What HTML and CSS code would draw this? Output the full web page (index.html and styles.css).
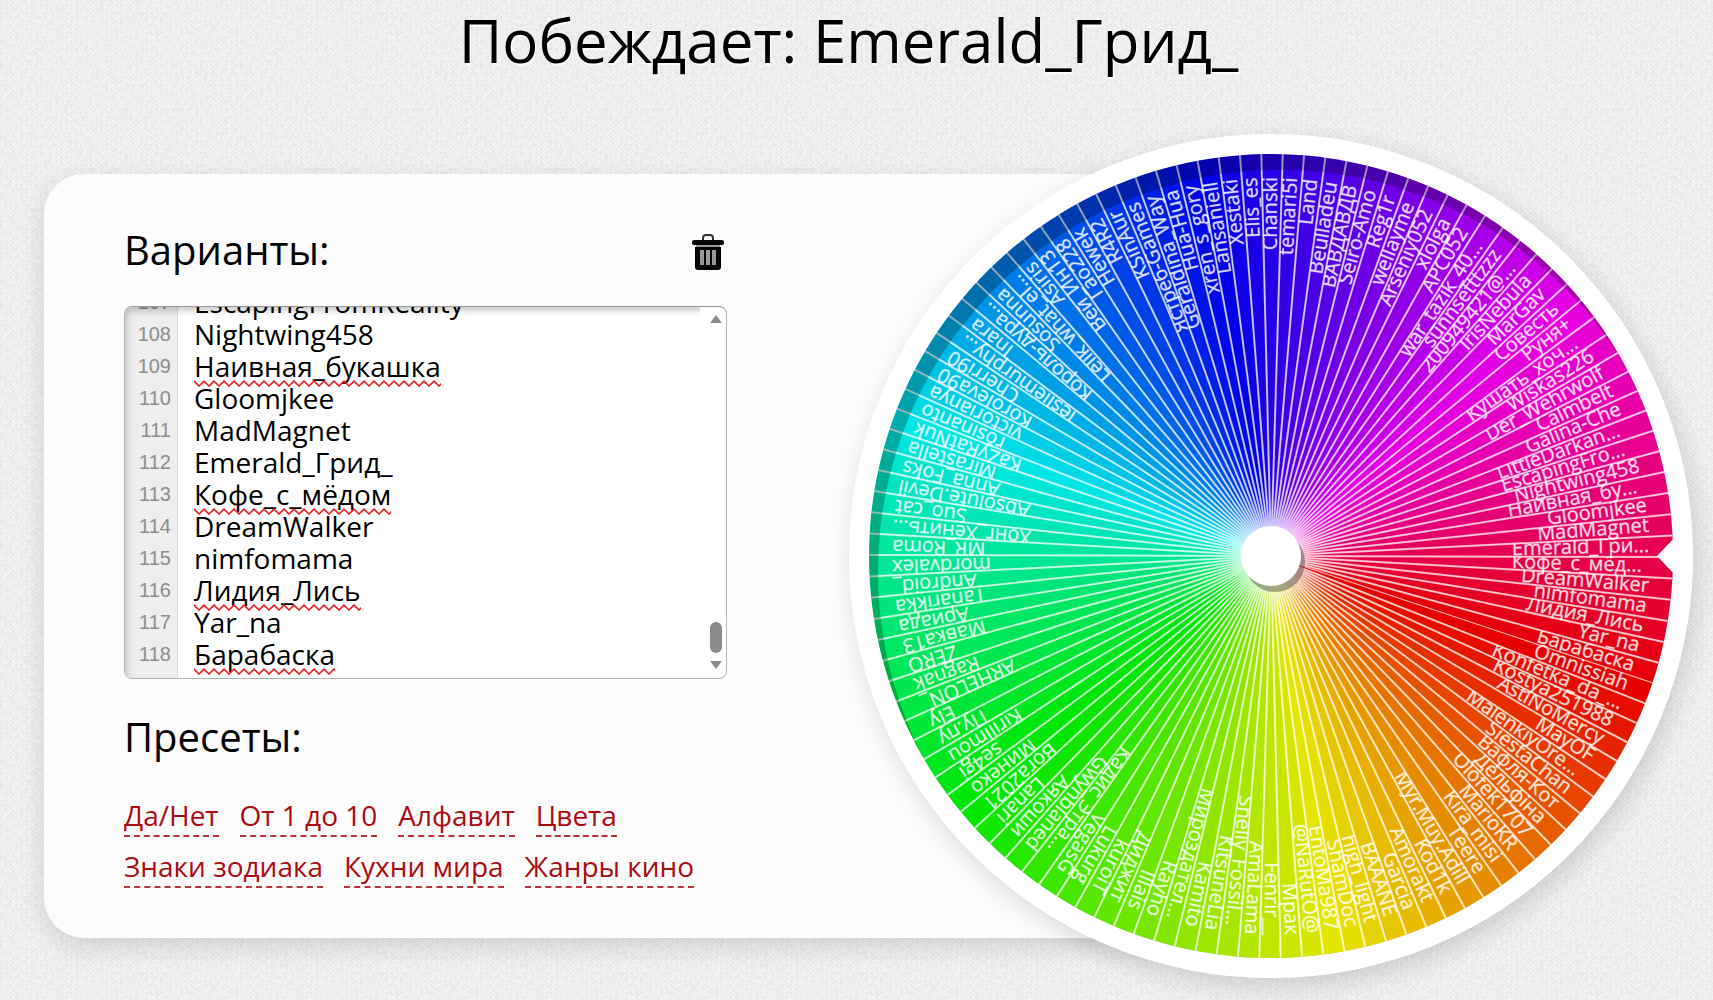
FILE: index.html
```html
<!DOCTYPE html>
<html lang="ru">
<head>
<meta charset="utf-8">
<title>Колесо выбора</title>
<link rel="stylesheet" href="styles.css">
</head>
<body>
<h1 class="result">Побеждает: Emerald_Грид_</h1>
<main class="stage">
  <section class="panel">
    <div class="form">
      <div class="form-head">
        <h2 class="title"><label for="options">Варианты:</label></h2>
        <button class="clear" type="button" aria-label="Очистить">
          <svg viewBox="0 0 32 36" width="32" height="36" aria-hidden="true">
            <path d="M11 7V4q0-3 3-3h4q3 0 3 3v3" fill="none" stroke="#333" stroke-width="2"/>
            <rect x="0" y="6" width="32" height="5" rx="2" fill="#050505"/>
            <rect x="4" y="11" width="24" height="2" fill="#999"/>
            <path d="M3 13h26v20q0 3-3 3H6q-3 0-3-3z" fill="#050505"/>
            <path d="M10 16v15M16 16v15M22 16v15" stroke="#999" stroke-width="4"/>
          </svg>
        </button>
      </div>
      <div class="editor">
        <div class="gutter" id="gutter" aria-hidden="true"></div>
        <div class="field">
          <textarea class="options" id="options" wrap="off" spellcheck="false"></textarea>
          <div class="marks" id="marks"></div>
        </div>
        <div class="scrollbar" aria-hidden="true">
          <svg viewBox="0 0 12 8" width="12" height="8"><path d="M6 0l6 8H0z" fill="#8a8a8a"/></svg>
          <span class="track"><span class="thumb"></span></span>
          <svg viewBox="0 0 12 8" width="12" height="8"><path d="M0 0h12L6 8z" fill="#8a8a8a"/></svg>
        </div>
      </div>
      <h2 class="title presets-title">Пресеты:</h2>
      <nav class="presets">
        <a href="#yesno">Да/Нет</a>
        <a href="#numbers">От 1 до 10</a>
        <a href="#alphabet">Алфавит</a>
        <a href="#colors">Цвета</a>
        <a href="#zodiac">Знаки зодиака</a>
        <a href="#cuisines">Кухни мира</a>
        <a href="#genres">Жанры кино</a>
      </nav>
    </div>
  </section>
  <div class="wheel">
    <svg class="wheel-face" viewBox="-422 -422 844 844" role="img" aria-label="Колесо с вариантами">
      <circle r="422" fill="#fff"/>
      <g id="sectors"></g>
      <path d="M-402 0A402 402 0 1 1 402 0A402 402 0 1 1 -402 0ZM-393 16A402 402 0 1 0 411 16A402 402 0 1 0 -393 16Z" fill="#000" fill-opacity=".25" clip-path="url(#disc)"/>
      <clipPath id="disc"><circle r="402"/></clipPath>
      <path d="M386 0l20-21v42z" fill="#fff"/>
      <circle cx="4" cy="6" r="30" fill="#000" fill-opacity=".33"/>
      <circle r="30" fill="#fff"/>
    </svg>
  </div>
</main>
<script src="wheel.js"></script>
</body>
</html>
```

FILE: styles.css
```css
* {
  box-sizing: border-box;
}

body {
  margin: 0;
  font-family: "Open Sans", "Noto Sans", sans-serif;
  color: #000;
  background-color: #f4f4f4;
  background-image:
    url("data:image/svg+xml,%3Csvg xmlns='http://www.w3.org/2000/svg' width='240' height='240'%3E%3Cfilter id='n' x='0' y='0' width='100%25' height='100%25'%3E%3CfeTurbulence type='fractalNoise' baseFrequency='.25' numOctaves='2' stitchTiles='stitch'/%3E%3CfeColorMatrix values='0 0 0 0 0 0 0 0 0 0 0 0 0 0 0 .09 0 0 0 -.03'/%3E%3C/filter%3E%3Crect width='240' height='240' filter='url(%23n)'/%3E%3C/svg%3E"),
    radial-gradient(circle at 1px 1px, rgba(0, 0, 0, .03) 1px, transparent 1px),
    radial-gradient(circle at 3px 3px, rgba(0, 0, 0, .02) 1px, transparent 1px);
  background-size: 240px 240px, 5px 4px, 5px 4px;
}

.result {
  margin: 0;
  height: 134px;
  padding-right: 16px;
  font-size: 60px;
  font-weight: 400;
  line-height: 80px;
  text-align: center;
  text-shadow: 1px 2px 1px #fff;
}

.stage {
  display: grid;
  grid-template-columns: 805fr 422fr 422fr;
  padding: 0 20px 22px 44px;
}

.panel {
  grid-area: 1 / 1 / 2 / 3;
  align-self: center;
  padding: 48px 0 50px 80px;
  border-radius: 40px 0 0 40px;
  background: #fcfcfc;
  box-shadow: 0 8px 24px rgba(0, 0, 0, .13);
}

.form {
  max-width: 603px;
}

.form-head {
  display: flex;
  align-items: center;
  justify-content: space-between;
  padding-right: 3px;
  margin-bottom: 28px;
}

.title {
  margin: 0;
  font-size: 40px;
  font-weight: 400;
  line-height: 56px;
}

.clear {
  display: flex;
  padding: 4px 0 0;
  border: 0;
  background: none;
}

.editor {
  position: relative;
  display: flex;
  height: 373px;
  border: 1px solid #b4b4b4;
  border-top-color: #999;
  border-radius: 8px;
  background: #fff;
  overflow: hidden;
}

.editor::after {
  content: "";
  position: absolute;
  inset: 0 20px 0 0;
  border-radius: 7px 0 0 7px;
  box-shadow: inset 2px 4px 6px rgba(0, 0, 0, .2);
  clip-path: inset(0 6px 0 0);
  pointer-events: none;
}

.gutter {
  flex: 0 0 53px;
  padding-right: 6px;
  border-right: 1px solid #ddd;
  background: #eee;
  color: #8c8c8c;
  font: 20px/32px "Liberation Sans", Arial, sans-serif;
  text-align: right;
  overflow: hidden;
}

.field {
  position: relative;
  flex: 1;
  overflow: hidden;
}

.options {
  display: block;
  width: 100%;
  height: 100%;
  padding: 8px 16px;
  border: 0;
  outline: 0;
  resize: none;
  background: none;
  color: #000;
  font: 28px/32px "Open Sans", "Noto Sans", sans-serif;
  white-space: pre;
  scrollbar-width: none;
}

.marks {
  position: absolute;
  inset: 0;
  pointer-events: none;
}

.mark {
  position: absolute;
  left: 16px;
  height: 7px;
  background: url("data:image/svg+xml,%3Csvg xmlns='http://www.w3.org/2000/svg' width='10' height='7'%3E%3Cpath d='M-1 0L0 1L5 6L10 1L11 0' fill='none' stroke='%23ee1c24' stroke-width='1.6'/%3E%3C/svg%3E") repeat-x;
}

.scrollbar {
  display: flex;
  flex: 0 0 20px;
  flex-direction: column;
  align-items: center;
  padding: 8px 0 9px;
}

.track {
  display: flex;
  flex: 1;
  align-items: flex-end;
  padding-bottom: 8px;
}

.thumb {
  width: 12px;
  height: 31px;
  border-radius: 6px;
  background: #8a8a8a;
}

.presets-title {
  margin: 30px 0 34px;
}

.presets {
  display: flex;
  flex-wrap: wrap;
  gap: 13px 21px;
}

.presets a {
  padding-bottom: 4px;
  border-bottom: 2px dashed #b8323a;
  color: #ae0a12;
  font-size: 28px;
  line-height: 32px;
  text-decoration: none;
}

.wheel {
  grid-area: 1 / 2 / 2 / 4;
  border-radius: 50%;
  box-shadow: 4px 8px 24px rgba(0, 0, 0, .15);
}

.wheel-face {
  display: block;
  width: 100%;
}

.divider {
  stroke: #fff;
  stroke-opacity: .72;
  stroke-width: 2;
}

.label {
  fill: #fff;
  fill-opacity: .82;
  stroke: #fff;
  stroke-opacity: .3;
  stroke-width: 1;
  font-size: 20px;
}
```

FILE: wheel.js
```js
const names = `Omnissiah
Konfetka_da_…
Kostya251988
AstiNoMercy
MayOF
MalenkiyOre…
SiestaChan
Вафля-Кот
Дельфiна
Olofek1707
MarioKR
Kira_misi
Teere
Myr.Muy.Adill
Kod1k
Amorakt
Garcia
BAAANE
high_light
ShamDoc
EntoMa987
@NaRutO@
Мрак
Fenrir__
AmaLama
Shelly_Fossil…
KitsuneLia
Kamito
Мироздател…
Rayho
Illais
Диджит
kuroiT
Lukurg
VegasG
Кадис_Этра…
Gwynblaned
Аякоши
Lanari
Bora2021
Минеко
se4gi
Kirillmou
Пу.пу
Ely
ARHELON_
Ragnak
ZERO
Мавка13
Ариада
Tanarikka
Android_
mordvalex
MR_Roma
Хонг_Хенить…
Suo_cat
Absolute.Devil
Anna_Foks
Mirastella
KaZyRatNuk
rosinanto
victorianya
Koroleva90
Cherri90
lesliemurphy…
Inara
Король-дура…
Sosunna
Lelik_what_el…
Asiris
Вей_Ин13
Гао228
Hewek
R4R2
KSinAur
Ястреб-Games
Geraldina_Way
Hua-Hua
xren_s_gory
Lansaniell
Xestaki
Elis_es
Chanski
temari5i
Land
Beulladeu
ВАВДАВДВ
Seiro-Amo
Reg1r
wellayme
Arseniy052
xlolga
APC052
war_tazik_40…
sunnsetttzzz
200949421@…
IrisNebula
MarGav
Совесть
Руня+
Кушать_хоч…
Wiskas226
Der_Wehrwolf
Calmbelt
Galina-Che
LittleDarkan…
EscapingFromReality
Nightwing458
Наивная_букашка
Gloomjkee
MadMagnet
Emerald_Грид_
Кофе_с_мёдом
DreamWalker
nimfomama
Лидия_Лись
Yar_na
Барабаска`.split('\n');

const shortNames = {
  'EscapingFromReality': 'EscapingFro…',
  'Наивная_букашка': 'Наивная_бу…',
  'Emerald_Грид_': 'Emerald_Гри…',
  'Кофе_с_мёдом': 'Кофе_с_мёд…'
};
const misspelled = ['Наивная_букашка', 'Кофе_с_мёдом', 'Лидия_Лись', 'Барабаска'];
const lineHeight = 32;
const padding = 8;

const options = document.getElementById('options');
const gutter = document.getElementById('gutter');
const marks = document.getElementById('marks');

options.value = names.join('\n');

const measure = document.createElement('canvas').getContext('2d');
measure.font = '28px "Open Sans"';

// Line numbers and spelling marks are drawn only for the lines in view.
function syncScroll() {
  const scroll = options.scrollTop;
  const first = Math.max(0, Math.floor((scroll - padding) / lineHeight));
  const last = Math.min(names.length, Math.ceil((scroll - padding + options.clientHeight) / lineHeight));
  let numbers = '';
  let spelling = '';
  for (let i = first; i < last; i++) {
    const top = padding + i * lineHeight - scroll;
    numbers += `<div${i === first ? ` style="margin-top:${top}px"` : ''}>${i + 1}</div>`;
    if (misspelled.includes(names[i])) {
      const width = Math.round(measure.measureText(names[i]).width);
      spelling += `<span class="mark" style="top:${top + lineHeight - 2}px;width:${width}px"></span>`;
    }
  }
  gutter.innerHTML = numbers;
  marks.innerHTML = spelling;
}
options.addEventListener('scroll', syncScroll);
options.scrollTop = options.scrollHeight;
syncScroll();

const radius = 402;
const step = 360 / names.length;
const turn = 18.45;
let sectors = '';
for (let i = names.length - 1; i >= 0; i--) {
  const half = step / 2 * Math.PI / 180;
  const x = radius * Math.cos(half);
  const y = radius * Math.sin(half);
  const name = shortNames[names[i]] || names[i];
  const cut = name.endsWith('…');
  sectors += `<g transform="rotate(${turn + step / 2 + i * step})">
    <path d="M0 0L${x} ${-y}A${radius} ${radius} 0 0 1 ${x} ${y}Z" fill="hsl(${i * step} 100% 45%)"/>
    <text class="label" x="${cut ? 241 : 379}" y="5" text-anchor="${cut ? 'start' : 'end'}">${name.replace('…', '...')}</text>
    <path class="divider" d="M0 0L${x} ${y}"/></g>`;
}
document.getElementById('sectors').innerHTML = sectors;
```
